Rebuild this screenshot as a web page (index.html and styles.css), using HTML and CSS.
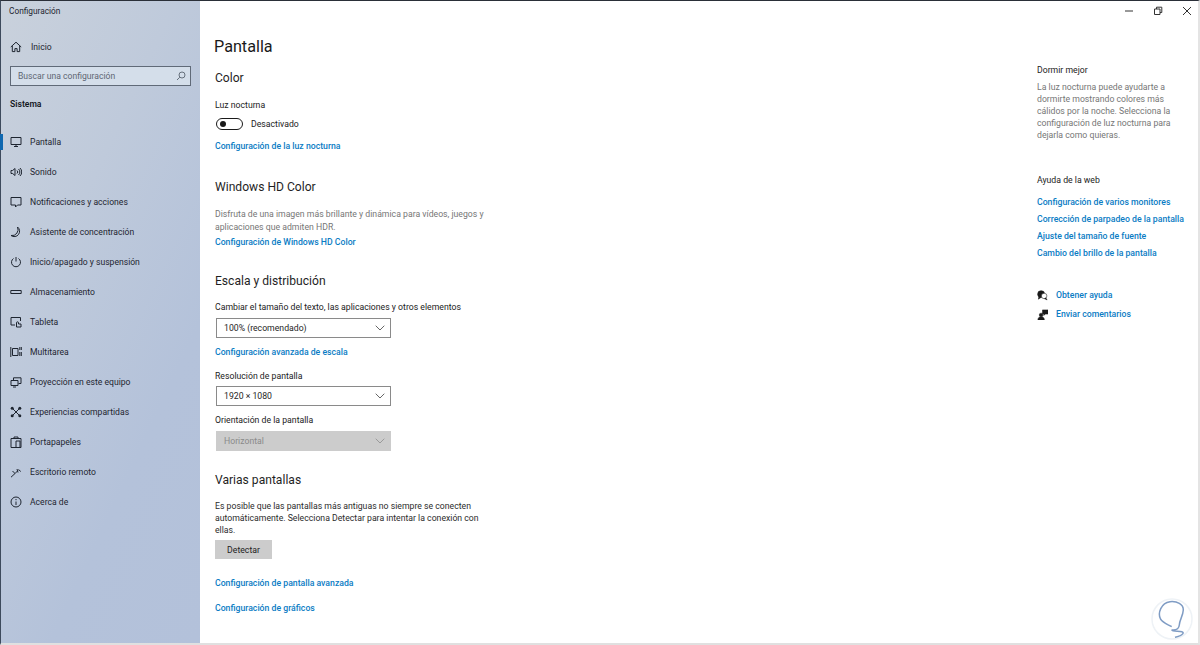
FILE: index.html
```html
<!DOCTYPE html>
<html lang="es">
<head>
<meta charset="utf-8">
<title>Configuración</title>
<link rel="stylesheet" href="styles.css">
</head>
<body>
<div class="window">
  <nav class="sidebar">
    <div class="app-title">Configuración</div>
    <a class="home">
      <svg class="ico" viewBox="0 0 12 12"><path d="M.8 6 6 1.2 11.2 6M2.3 5v5.6h2.6V7.6h2.2v3h2.6V5"/></svg>
      <span>Inicio</span>
    </a>
    <div class="search">
      <span>Buscar una configuración</span>
      <svg class="ico-s" viewBox="0 0 10 10"><circle cx="6" cy="4" r="3"/><path d="M3.8 6.2 1 9"/></svg>
    </div>
    <div class="sys">Sistema</div>
    <ul class="nav">
      <li class="active"><svg class="ico" viewBox="0 0 12 12"><path d="M1 1.500h10v7H1zM4 10.500h4M6 8.500v2"/></svg><span>Pantalla</span></li>
      <li><svg class="ico" viewBox="0 0 12 12"><path d="M1 4.500v3h1.600L5 9.500v-7L2.600 4.500zM7 4.500a2 2 0 0 1 0 3M8.500 3a4 4 0 0 1 0 6M10 2a5.500 5.500 0 0 1 0 8"/></svg><span>Sonido</span></li>
      <li><svg class="ico" viewBox="0 0 12 12"><path d="M1 1.500h10v7.500H7.500L5.500 11V9H1z"/></svg><span>Notificaciones y acciones</span></li>
      <li><svg class="ico" viewBox="0 0 12 12"><path d="M7.500 1A5 5 0 0 1 1 9.500 6 6 0 0 0 7.500 1z"/></svg><span>Asistente de concentración</span></li>
      <li><svg class="ico" viewBox="0 0 12 12"><path d="M3.500 2.500a4.500 4.500 0 1 0 5 0M6 1v4.500"/></svg><span>Inicio/apagado y suspensión</span></li>
      <li><svg class="ico" viewBox="0 0 12 12"><path d="M.8 4.500h10.400v3H.8z"/></svg><span>Almacenamiento</span></li>
      <li><svg class="ico" viewBox="0 0 12 12"><path d="M5 9H1V1.500h9.500V5"/><path d="M6.500 11V6.800a1 1 0 0 1 2 0V8H11v3z"/></svg><span>Tableta</span></li>
      <li><svg class="ico" viewBox="0 0 12 12"><path d="M2.500 2.500h5.500v7H2.500zM.8 1v10M9.800 1v3M11.300 1v3M9.800 6v4M11.300 6v4"/></svg><span>Multitarea</span></li>
      <li><svg class="ico" viewBox="0 0 12 12"><path d="M3.500 4V1.800h7.500v5.700H8.500M1 4.500h7v5H1zM3 11h3"/></svg><span>Proyección en este equipo</span></li>
      <li><svg class="ico ico-fill" viewBox="0 0 12 12"><circle cx="2.200" cy="2.200" r="1.500"/><circle cx="9.800" cy="2.200" r="1.500"/><circle cx="2.200" cy="9.800" r="1.500"/><circle cx="9.800" cy="9.800" r="1.500"/><path d="m2.500 2.500 7 7M9.500 2.500l-7 7"/></svg><span>Experiencias compartidas</span></li>
      <li><svg class="ico" viewBox="0 0 12 12"><path d="M1 2.500h10v9H1zM4 2.500V1h4v1.500M6 5h4v6.500H6z"/></svg><span>Portapapeles</span></li>
      <li><svg class="ico" viewBox="0 0 12 12"><path d="M1 11.200 5 7.500 8 4.500M5 7.500 2.500 5M8 6.500 7 3M8.500 3.500 10.800 5.500"/></svg><span>Escritorio remoto</span></li>
      <li><svg class="ico" viewBox="0 0 12 12"><circle cx="6" cy="6" r="5"/><path d="M6 5.500V9M6 3v1.200"/></svg><span>Acerca de</span></li>
    </ul>
  </nav>

  <div class="content">
    <div class="titlebar">
      <svg class="ctl" viewBox="0 0 10 10"><path d="M1 5h8"/></svg>
      <svg class="ctl" viewBox="0 0 10 10"><path d="M1.500 3h5.500v5.500H1.500zM3.500 3V1.200h5.300v5.300H7"/></svg>
      <svg class="ctl" viewBox="0 0 10 10"><path d="m1 1 8 8M9 1 1 9"/></svg>
    </div>
    <div class="columns">
      <main class="main">
        <h1>Pantalla</h1>
        <h2 class="h-color">Color</h2>
        <div class="label l-night">Luz nocturna</div>
        <div class="toggle-row">
          <span class="toggle"><i></i></span>
          <span>Desactivado</span>
        </div>
        <a class="link l-nightcfg">Configuración de la luz nocturna</a>

        <h2 class="h-hd">Windows HD Color</h2>
        <p class="desc p-hd">Disfruta de una imagen más brillante y dinámica para vídeos, juegos y aplicaciones que admiten HDR.</p>
        <a class="link l-hd">Configuración de Windows HD Color</a>

        <h2 class="h-scale">Escala y distribución</h2>
        <div class="label l-size">Cambiar el tamaño del texto, las aplicaciones y otros elementos</div>
        <div class="select s-first"><span>100% (recomendado)</span><svg class="chev" viewBox="0 0 10 6"><path d="m.7.700 4.300 4.300L9.300.700"/></svg></div>
        <a class="link l-scale">Configuración avanzada de escala</a>
        <div class="label l-res">Resolución de pantalla</div>
        <div class="select s-res"><span>1920 × 1080</span><svg class="chev" viewBox="0 0 10 6"><path d="m.7.700 4.300 4.300L9.300.700"/></svg></div>
        <div class="label l-orient">Orientación de la pantalla</div>
        <div class="select disabled s-orient"><span>Horizontal</span><svg class="chev" viewBox="0 0 10 6"><path d="m.7.700 4.300 4.300L9.300.700"/></svg></div>

        <h2 class="h-multi">Varias pantallas</h2>
        <p class="plain p-multi">Es posible que las pantallas más antiguas no siempre se conecten automáticamente. Selecciona Detectar para intentar la conexión con ellas.</p>
        <button class="btn" type="button">Detectar</button>
        <a class="link l-adv">Configuración de pantalla avanzada</a>
        <a class="link l-gfx">Configuración de gráficos</a>
      </main>

      <aside class="aside">
        <h3>Dormir mejor</h3>
        <p class="desc p-sleep">La luz nocturna puede ayudarte a dormirte mostrando colores más cálidos por la noche. Selecciona la configuración de luz nocturna para dejarla como quieras.</p>
        <h3 class="h-web">Ayuda de la web</h3>
        <ul class="web">
          <li><a class="link">Configuración de varios monitores</a></li>
          <li><a class="link">Corrección de parpadeo de la pantalla</a></li>
          <li><a class="link">Ajuste del tamaño de fuente</a></li>
          <li><a class="link">Cambio del brillo de la pantalla</a></li>
        </ul>
        <div class="help">
          <svg class="hi" viewBox="0 0 12 12"><circle cx="4.500" cy="4.500" r="3.800"/><path d="M2 7.500 1.500 10l3-2"/><circle class="w" cx="7.800" cy="6.500" r="3"/><path d="m9.500 8.500 1.500 2.300-3-1.500"/></svg>
          <a class="link">Obtener ayuda</a>
        </div>
        <div class="help h-second">
          <svg class="hi" viewBox="0 0 12 12"><circle cx="4.500" cy="6.500" r="2"/><path d="M1 12c0-2.500 1.500-3.500 3.500-3.500S8 9.500 8 12zM6 1h6v4.500H9L7.500 7V5.500H6z"/></svg>
          <a class="link">Enviar comentarios</a>
        </div>
      </aside>
    </div>
  </div>
</div>
<svg class="mark" viewBox="0 0 44 44"><circle class="ring" cx="22" cy="22" r="20"/><path class="s" d="M21.700 29.700C17 27 13 26 10.500 22 7.500 16 11 6 20 4.700 27 4 33.500 7 33.300 13 33 19 29.500 23 29.300 28 29 31 27 33 23.300 33 21 33 22 33.500 25 34 30 34.500 34 34.500 33 36.500 32 38.500 28 39.500 25 40.300"/></svg>
</body>
</html>
```

FILE: styles.css
```css
* { box-sizing: border-box; }
html, body { margin: 0; padding: 0; height: 100%; background: #fff; overflow: hidden; }
body { font-family: Roboto, "Noto Sans", sans-serif; font-size: 8.700px; color: #222; position: relative; }
p, h1, h2, h3, ul { margin: 0; padding: 0; font-weight: 400; }
ul { list-style: none; }

.window { display: flex; width: 1200px; height: 645px; border-top: 1px solid #2a2f38; border-left: 1px solid #3d4a5c; border-right: 2px solid #e4e4e4; border-bottom: 2px solid #e0e0e0; }

.sidebar { width: 199px; flex: none; background: linear-gradient(115deg, #c9d1dc 0%, #bfcadb 35%, #b4c2da 70%, #b3c1da 100%); color: #1e2530; position: relative; font-size: 8.600px; }
.app-title { height: 21px; padding-left: 8px; line-height: 21px; font-size: 8.300px; }
.home { display: flex; align-items: center; height: 20px; margin-top: 15px; padding-left: 9px; gap: 9px; }
.ico { width: 12px; height: 12px; flex: none; fill: none; stroke: #1e2530; stroke-width: 1; }
.ico-fill circle { fill: #1e2530; stroke: none; }
.search { display: flex; align-items: center; justify-content: space-between; height: 20px; margin: 9px 9px 0 9px; padding: 0 4px 0 7px; background: #d4deea; border: 1px solid #606a78; color: #5e6672; }
.ico-s { width: 10px; height: 10px; fill: none; stroke: #66707c; stroke-width: 1; }
.sys { margin: 11px 0 0 9px; height: 14px; line-height: 14px; font-weight: 600; color: #14181f; }
.nav { margin-top: 16px; }
.nav li { display: flex; align-items: center; height: 30px; padding-left: 9px; gap: 8px; position: relative; }
.nav li.active::before { content: ""; position: absolute; left: -1px; top: 7px; width: 3px; height: 16px; background: #0f68b0; }

.content { flex: 1; min-width: 0; display: flex; flex-direction: column; background: #fff; }
.titlebar { display: flex; justify-content: flex-end; align-items: center; gap: 19px; height: 19px; padding-right: 6px; }
.ctl { width: 10px; height: 10px; fill: none; stroke: #333; stroke-width: 1; }
.columns { display: flex; flex: 1; }

.main { width: 837px; flex: none; padding-left: 15px; display: flex; flex-direction: column; align-items: flex-start; }
h1 { font-size: 16.200px; line-height: 22px; margin: 16px 0 0 -1px; color: #1a1a1a; }
h2 { font-size: 12.100px; line-height: 17px; color: #1f1f1f; }
.label, .link, .desc, .plain { line-height: 12px; display: block; }
.link { color: #0a7cc4; font-weight: 500; }
.desc { color: #767676; }
.plain { color: #2c2c2c; }

.h-color { margin-top: 12px; }
.l-night { margin-top: 12px; }
.toggle-row { display: flex; align-items: center; gap: 8px; margin: 6px 0 0 1px; height: 14px; }
.toggle { width: 27px; height: 12px; border: 1.500px solid #1a1a1a; border-radius: 6px; display: flex; align-items: center; padding-left: 3px; }
.toggle i { width: 6px; height: 6px; border-radius: 50%; background: #1a1a1a; }
.l-nightcfg { margin-top: 9px; }
.h-hd { margin-top: 27px; }
.p-hd { margin-top: 12px; width: 280px; line-height: 13px; }
.l-hd { margin-top: 2px; }
.h-scale { margin-top: 25px; }
.l-size { margin-top: 11px; }
.select { display: flex; align-items: center; justify-content: space-between; width: 175px; height: 20px; margin-left: 1px; padding: 0 5px 0 7px; border: 1.500px solid #8a8a8a; color: #262626; }
.chev { width: 10px; height: 6px; fill: none; stroke: #666; stroke-width: 1; }
.s-first { margin-top: 5px; }
.l-scale { margin-top: 8px; }
.l-res { margin-top: 12px; }
.s-res { margin-top: 4px; }
.l-orient { margin-top: 8px; }
.s-orient { margin-top: 5px; }
.disabled { background: #cccccc; border-color: #cccccc; color: #8a8a8a; }
.disabled .chev { stroke: #9a9a9a; }
.h-multi { margin-top: 21px; }
.p-multi { margin-top: 11px; width: 270px; }
.btn { width: 57px; height: 19px; margin-top: 4px; padding: 0; border: 0; background: #cccccc; font: inherit; color: #222; }
.l-adv { margin-top: 18px; }
.l-gfx { margin-top: 13px; }

.aside { flex: 1; padding-left: 0; }
h3 { font-size: 8.700px; line-height: 12px; margin-top: 44px; color: #222; }
.p-sleep { margin-top: 5px; width: 140px; }
.h-web { margin-top: 33px; }
.web { margin-top: 10px; display: flex; flex-direction: column; gap: 5px; }
.help { display: flex; align-items: center; gap: 8px; height: 12px; margin-top: 30px; }
.h-second { margin-top: 7px; }
.hi { width: 11px; height: 11px; fill: #1a1a1a; stroke: #1a1a1a; stroke-width: .6; flex: none; }
.hi .w { fill: #fff; }

.mark { position: absolute; left: 1150px; top: 597px; width: 44px; height: 44px; fill: none; }
.mark .ring { stroke: #eef2f6; stroke-width: 1.500; }
.mark .s { stroke: #7f9cc4; stroke-width: 1.500; }
```
